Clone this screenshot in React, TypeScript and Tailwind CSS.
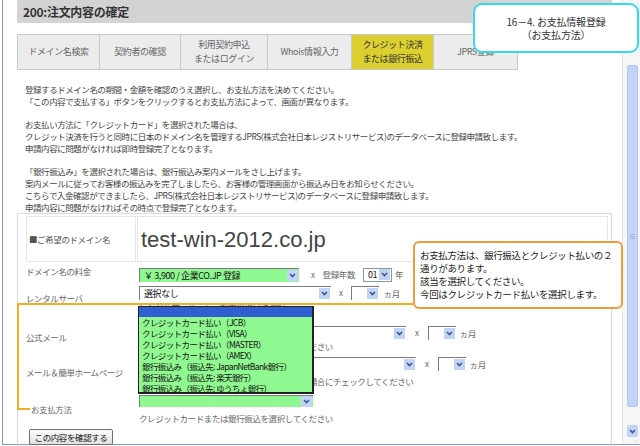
import React from "react";

function Arrow({ className = "h-[11px] w-[11px]" }: { className?: string }) {
  return (
    <span className={`flex shrink-0 items-center justify-center bg-[#c3d3f6] ${className}`}>
      <svg width="7" height="5" viewBox="0 0 7 5">
        <path d="M1 1 L3.5 3.6 L6 1" fill="none" stroke="#3b5891" strokeWidth="1.6" />
      </svg>
    </span>
  );
}

function Sel({ className, children }: { className: string; children?: React.ReactNode }) {
  return (
    <div className={`flex shrink-0 items-center justify-between pl-[4px] pr-[1px] text-[9px] text-[#111] ${className}`}>
      <span className="whitespace-nowrap leading-[11px]">{children}</span>
      <Arrow />
    </div>
  );
}

const tabs = [
  { w: "w-[83px] border-l", lines: ["ドメイン名検索"] },
  { w: "w-[81px]", lines: ["契約者の確認"] },
  { w: "w-[87px]", lines: ["利用契約申込", "またはログイン"] },
  { w: "w-[84px]", lines: ["Whois情報入力"] },
  { w: "w-[82px]", lines: ["クレジット決済", "または銀行振込"], on: true },
  { w: "w-[84px]", lines: ["JPRS登録"] },
];

const payOptions = [
  "クレジットカード払い（JCB）",
  "クレジットカード払い（VISA）",
  "クレジットカード払い（MASTER）",
  "クレジットカード払い（AMEX）",
  "銀行振込み（振込先: JapanNetBank銀行）",
  "銀行振込み（振込先: 楽天銀行）",
  "銀行振込み（振込先: ゆうちょ銀行）",
];

export default function App() {
  return (
    <div className="relative h-[446px] w-[640px] overflow-hidden bg-white font-['Noto_Sans_CJK_JP',sans-serif]">
      <div className="ml-[2px] flex h-[445px] border-b border-l border-[#7d9be0]">
        {/* page */}
        <main className="h-full w-[620px] shrink-0 border-r border-[#e6e6e6] pl-[14px] pr-[10px]">
          <div className="flex h-[23px] items-center bg-[#d3d3d3] pl-[6px] text-[12px] font-bold tracking-[-0.3px] text-[#333]">
            200:注文内容の確定
          </div>

          <div className="mt-[11px] flex h-[36px]">
            {tabs.map((t) => (
              <div
                key={t.lines[0]}
                className={`flex flex-col items-center justify-center border-y border-r border-[#c9c9c9] text-center text-[9px] leading-[14px] tracking-[-0.4px] ${t.w} ${
                  t.on ? "bg-[#dccf30] text-[#333]" : "bg-[#ececec] text-[#666]"
                }`}
              >
                {t.lines.map((l) => (
                  <span key={l}>{l}</span>
                ))}
              </div>
            ))}
          </div>

          <div className="mt-[13px] pl-[8px] text-[8.5px] leading-[12px] tracking-[-0.45px] text-[#444]">
            <p>登録するドメイン名の期間・金額を確認のうえ選択し、お支払方法を決めてください。</p>
            <p>「この内容で支払する」ボタンをクリックするとお支払方法によって、画面が異なります。</p>
            <p className="mt-[11px]">お支払い方法に「クレジットカード」を選択された場合は、</p>
            <p>クレジット決済を行うと同時に日本のドメイン名を管理するJPRS(株式会社日本レジストリサービス)のデータベースに登録申請致します。</p>
            <p>申請内容に問題がなければ即時登録完了となります。</p>
            <p className="mt-[11px]">「銀行振込み」を選択された場合は、銀行振込み案内メールをさし上げます。</p>
            <p>案内メールに従ってお客様の振込みを完了しましたら、お客様の管理画面から振込み日をお知らせください。</p>
            <p>こちらで入金確認ができましたら、JPRS(株式会社日本レジストリサービス)のデータベースに登録申請致します。</p>
            <p>申請内容に問題がなければその時点で登録完了となります。</p>
          </div>

          {/* form */}
          <div className="h-[240px] border-x border-t border-[#d9d9d9] pl-[8px] pt-[2px] text-[8.5px] tracking-[-0.4px] text-[#666]">
            <div className="flex h-[46px] gap-[1px] pr-[3px]">
              <div className="flex w-[110px] items-center border border-[#e6e6e6] pl-[2px] text-[#555]">■ご希望のドメイン名</div>
              <div className="flex flex-1 items-center border border-[#e6e6e6] pl-[3px] font-['Liberation_Sans',Arial,sans-serif] text-[22px] tracking-normal text-[#444]">
                test-win-2012.co.jp
              </div>
            </div>

            <div className="mt-[1px] flex h-[21px]">
              <div className="w-[113px] pt-[2px] leading-[12px]">ドメイン名の料金</div>
              <div className="flex items-center pt-[2px]">
                <Sel className="h-[14px] w-[160px] border-l border-t border-[#7b7b7b] bg-[#90f890]">￥ 3,900 / 企業CO.JP 登録</Sel>
                <span className="ml-[12px] text-[8px]">x</span>
                <span className="ml-[8px]">登録年数</span>
                <Sel className="ml-[8px] h-[14px] w-[29px] border border-[#7f9db9] bg-white">01</Sel>
                <span className="ml-[3px]">年</span>
              </div>
            </div>

            <div className="flex h-[38px]">
              <div className="w-[113px] pt-[8px] leading-[12px]">レンタルサーバ</div>
              <div className="pt-[2px]">
                <div className="flex items-center">
                  <Sel className="h-[14px] w-[192px] border-l border-t border-[#7b7b7b] bg-white">選択なし</Sel>
                  <span className="ml-[8px] text-[8px]">x</span>
                  <Sel className="ml-[8px] h-[14px] w-[28px] border-l border-t border-[#7b7b7b] bg-white" />
                  <span className="ml-[5px]">ヵ月</span>
                </div>
                <p className="leading-[12px]">レンタルサーバーをご利用の場合は選択</p>
              </div>
            </div>

            <div className="flex h-[31px]">
              <div className="w-[113px] pt-[9px] leading-[12px]">公式メール</div>
              <div className="pt-[4px]">
                <div className="flex items-center">
                  <Sel className="h-[14px] w-[267px] border-l border-t border-[#7b7b7b] bg-white" />
                  <span className="ml-[9px] text-[8px]">x</span>
                  <Sel className="ml-[9px] h-[14px] w-[28px] border-l border-t border-[#7b7b7b] bg-white" />
                  <span className="ml-[4px]">ヵ月</span>
                </div>
                <p className="leading-[12px]">公式メールを追加する場合は月数を選択してください</p>
              </div>
            </div>

            <div className="flex h-[37px]">
              <div className="w-[113px] pt-[13px] leading-[12px]">メール＆簡単ホームページ</div>
              <div className="pt-[4px]">
                <div className="flex items-center">
                  <Sel className="h-[14px] w-[277px] border-l border-t border-[#7b7b7b] bg-white" />
                  <span className="ml-[9px] text-[8px]">x</span>
                  <Sel className="ml-[9px] h-[14px] w-[28px] border-l border-t border-[#7b7b7b] bg-white" />
                  <span className="ml-[4px]">ヵ月</span>
                </div>
                <p className="mt-[4px] leading-[12px]">メール＆簡単ホームページのご利用を希望する場合にチェックしてください</p>
              </div>
            </div>

            <div className="flex h-[37px]">
              <div className="w-[113px] pl-[5px] pt-[13px] leading-[12px]">お支払方法</div>
              <div className="pt-[5px]">
                <Sel className="h-[12px] w-[174px] border-l border-t border-[#7b7b7b] bg-[#90f890]" />
                <p className="mt-[5px] leading-[12px]">クレジットカードまたは銀行振込を選択してください</p>
              </div>
            </div>

            <button className="ml-[3px] mt-[2px] h-[16px] w-[84px] rounded-[2px] border border-[#6f6f6f] bg-gradient-to-b from-[#fbfbfb] to-[#e2e2e2] text-[8.5px] leading-none tracking-[-0.4px] text-[#111]">
              この内容を確認する
            </button>
          </div>
        </main>

        {/* scrollbar */}
        <aside className="flex h-full w-[17px] flex-col bg-[#f6f6f6] pl-[4px] pr-[2px]">
          <div className="mt-[65px] flex h-[342px] items-center justify-center rounded-[2px] border border-[#b4c6f0] bg-[#c4d3f8]">
            <div className="flex flex-col gap-[1px]">
              <span className="h-px w-[5px] bg-[#9fb4e6]" />
              <span className="h-px w-[5px] bg-[#9fb4e6]" />
              <span className="h-px w-[5px] bg-[#9fb4e6]" />
            </div>
          </div>
          <div className="flex-1" />
          <Arrow className="mb-[2px] h-[12px] w-[11px] rounded-[2px]" />
          <div className="h-[5px] text-right text-[5px] leading-[5px] text-[#aaa]">⋰</div>
        </aside>
      </div>

      {/* step callout */}
      <div className="absolute left-[473px] top-[3px] flex h-[50px] w-[166px] flex-col items-center justify-center rounded-[9px] border-2 border-[#36d9ea] bg-white text-[10px] leading-[13px] tracking-[-0.2px] text-[#333]">
        <span>16－4. お支払情報登録</span>
        <span>（お支払方法）</span>
      </div>

      {/* orange bracket */}
      <div className="absolute left-[17px] top-[303px] h-[2px] w-[396px] bg-[#f2ad22]" />
      <div className="absolute left-[17px] top-[303px] h-[107px] w-[2px] bg-[#f2ad22]" />
      <div className="absolute left-[17px] top-[408px] h-[2px] w-[13px] bg-[#f2ad22]" />

      {/* note callout */}
      <div className="absolute left-[413px] top-[241px] h-[68px] w-[210px] rounded-[6px] border-2 border-[#f29a3a] bg-white pl-[5px] pt-[6px] text-[9.5px] leading-[13px] tracking-[-0.35px] text-[#222]">
        <p>お支払方法は、銀行振込とクレジット払いの２</p>
        <p>通りがあります。</p>
        <p>該当を選択してください。</p>
        <p>今回はクレジットカード払いを選択します。</p>
      </div>

      {/* open select list */}
      <div className="absolute left-[138px] top-[306px] h-[88px] w-[176px] border border-b-2 border-r-2 border-[#222] bg-[#90f890] text-[8.5px] tracking-[-0.6px] text-[#111]">
        <div className="h-[10px] bg-[#2f5fd0]" />
        {payOptions.map((o) => (
          <div key={o} className="h-[11px] pl-[3px] leading-[11px]">
            {o}
          </div>
        ))}
      </div>
    </div>
  );
}
